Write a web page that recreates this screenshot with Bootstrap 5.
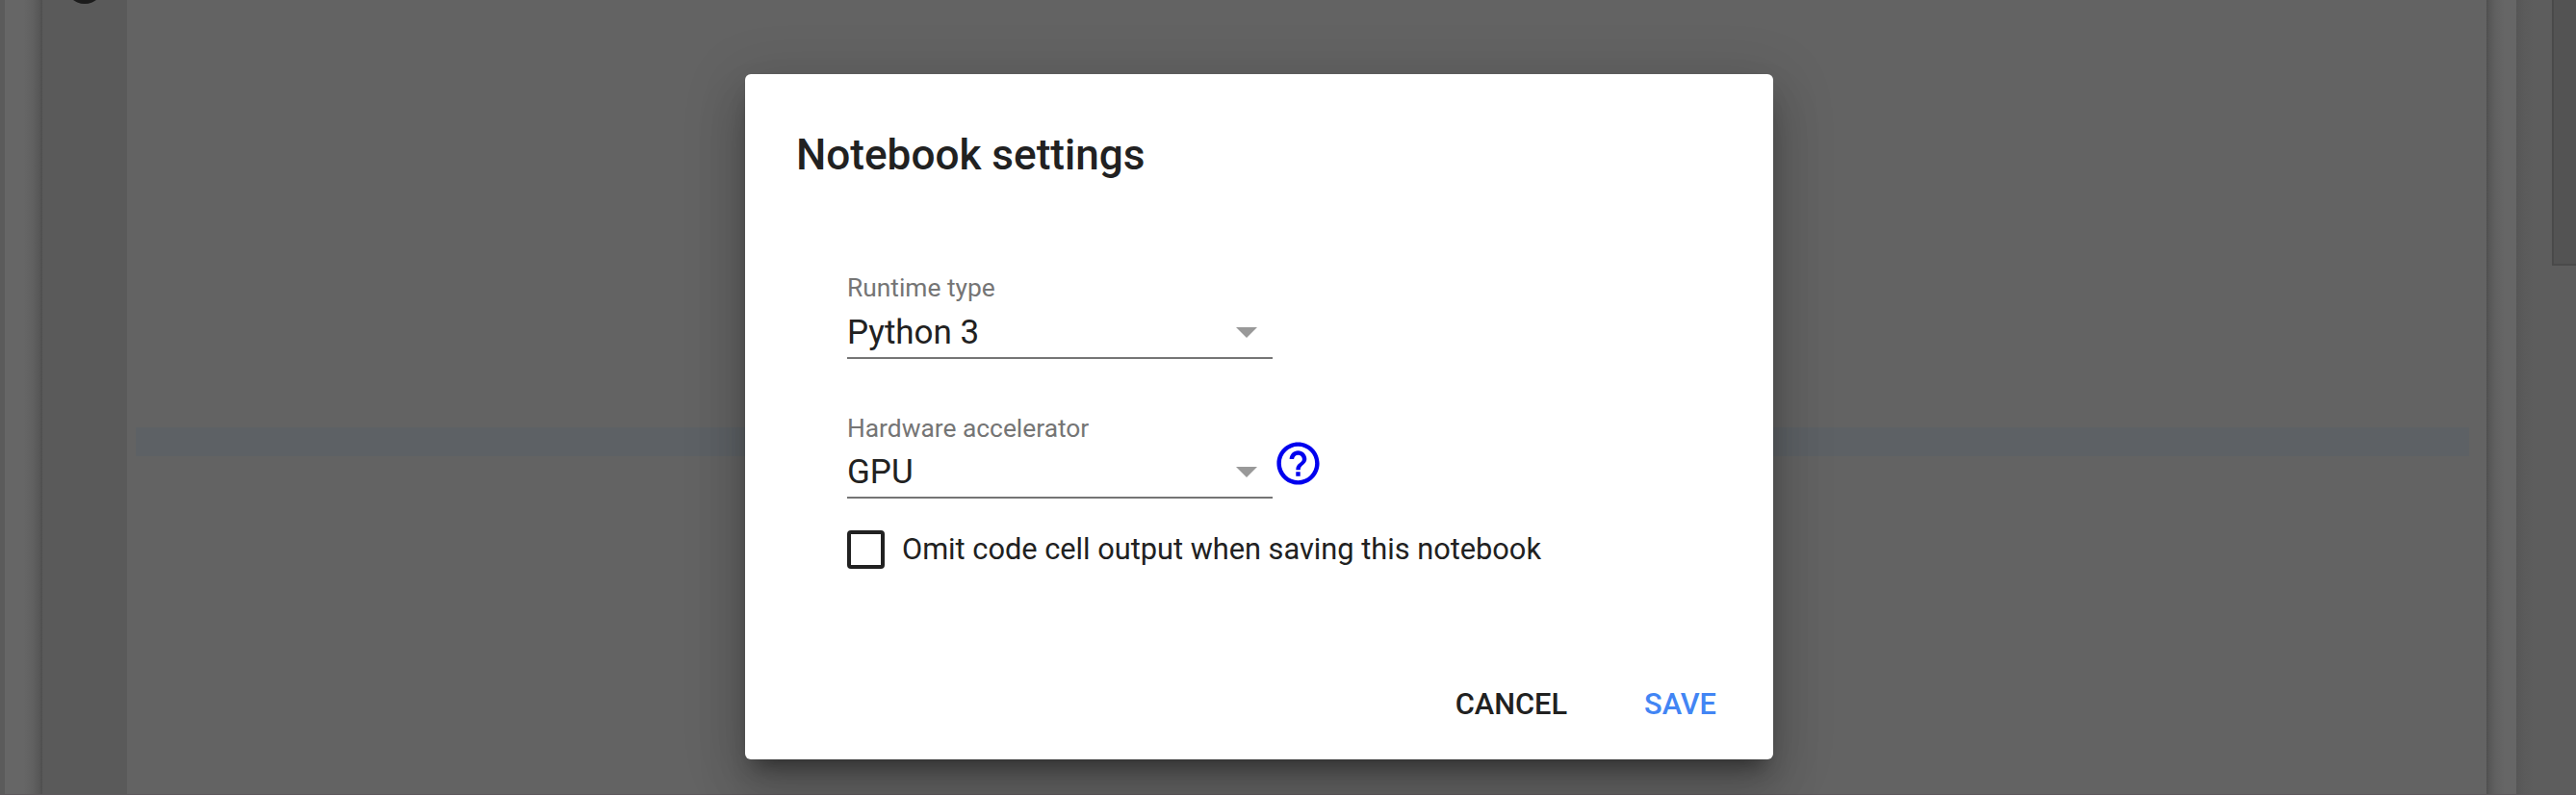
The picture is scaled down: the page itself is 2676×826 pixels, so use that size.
<!DOCTYPE html>
<html lang="en">
<head>
<meta charset="utf-8">
<title>Notebook settings</title>
<link href="https://cdn.jsdelivr.net/npm/bootstrap@5.3.0/dist/css/bootstrap.min.css" rel="stylesheet">
<style>
body{font-family:Roboto,"Liberation Sans",sans-serif;color:#212121;background:#636363}
.page{height:826px;width:2676px;border-bottom:1px solid #5d585c}
.edge{width:5px;background:#5b5b5b}
.gap-left{width:39px;background:linear-gradient(90deg,#666 0,#666 50%,#606060 75%,#575757 92%,#4e4e4e 100%)}
.gutter{width:88px;background:#5a5a5a}
.run-dot{width:40px;height:40px;background:#1c1c1c;margin:-36px 0 0 24px}
.cells{background:#636363;padding:444px 18px 0 9px}
.drop-line{height:30px;background:#5d6165}
.gap-right{width:31px;background:linear-gradient(90deg,#4e4e4e 0,#575757 10%,#606060 30%,#666 60%,#666 100%)}
.track{width:62px;background:linear-gradient(90deg,#565656 0,#5b5b5b 14%,#5d5d5d 30%)}
.thumb{width:25px;height:276px;background:#535353;border:solid #4a4a4a;border-width:0 0 2px 2px}
.dialog-layer{padding:77px 0 0 774px}
.dialog-box{width:1068px;height:712px;border-radius:6px;padding:54px 59px 0 53px;
 box-shadow:0 32px 48px 4px rgba(0,0,0,.14),0 12px 60px 10px rgba(0,0,0,.12),0 16px 20px -10px rgba(0,0,0,.4)}
.dialog-title{font-size:44.1px;line-height:60px;font-weight:500}
.fields{padding:89px 0 0 53px}
.field-label{font-size:26.35px;line-height:38px;height:38px;color:#757575}
.field + .field .field-label{padding-top:1px}
.field-select{width:442px;height:55px;font-size:35px;line-height:51px;border-bottom:2px solid #757575;padding-right:16px}
.field-select svg{margin-top:1px}
.field-select span{padding-top:2px}
.field + .field{margin-top:52px}
.help{margin:30px 0 0 0}
.check-row{margin-top:33px;gap:18px;font-size:30.76px;line-height:39px}
.check-box{width:39px;height:40px;border:4px solid #212121;border-radius:4px;background:#fff}
.actions{margin-top:117px;gap:80px;font-size:30.76px;line-height:48px;font-weight:500}
.actions .btn{font:inherit;padding:0;border:0;color:#212121}
.actions .btn-save{color:#4285f4}
</style>
</head>
<body class="overflow-hidden">
<div class="page d-flex overflow-hidden">
 <div class="edge"></div>
 <div class="gap-left"></div>
 <div class="gutter"><div class="run-dot rounded-circle"></div></div>
 <div class="cells flex-grow-1"><div class="drop-line"></div></div>
 <div class="gap-right"></div>
 <div class="track d-flex justify-content-end"><div class="thumb"></div></div>
</div>
<div class="dialog-layer position-absolute top-0 start-0">
 <div class="dialog-box bg-white" role="dialog">
  <h1 class="dialog-title m-0">Notebook settings</h1>
  <div class="fields">
   <div class="field">
    <div class="field-label">Runtime type</div>
    <div class="field-select d-flex justify-content-between align-items-center"><span>Python 3</span>
     <svg width="22" height="11" viewBox="0 0 22 11"><path d="M0 0h22L11 11z" fill="#999"/></svg></div>
   </div>
   <div class="field d-flex">
    <div>
     <div class="field-label">Hardware accelerator</div>
     <div class="field-select d-flex justify-content-between align-items-center"><span>GPU</span>
      <svg width="22" height="11" viewBox="0 0 22 11"><path d="M0 0h22L11 11z" fill="#999"/></svg></div>
    </div>
    <svg class="help" width="53" height="53" viewBox="0 0 24 24" fill="#00e"><path d="M11 18h2v-2h-2v2zm1-16C6.48 2 2 6.48 2 12s4.48 10 10 10 10-4.48 10-10S17.52 2 12 2zm0 18c-4.41 0-8-3.59-8-8s3.590-8 8-8 8 3.590 8 8-3.590 8-8 8zm0-14c-2.210 0-4 1.790-4 4h2c0-1.100.9-2 2-2s2 .9 2 2c0 2-3 1.750-3 5h2c0-2.250 3-2.500 3-5 0-2.210-1.790-4-4-4z"/></svg>
   </div>
   <div class="check-row d-flex"><span class="check-box"></span><span>Omit code cell output when saving this notebook</span></div>
  </div>
  <div class="actions d-flex justify-content-end"><button class="btn">CANCEL</button><button class="btn btn-save">SAVE</button></div>
 </div>
</div>
<script src="https://cdn.jsdelivr.net/npm/bootstrap@5.3.0/dist/js/bootstrap.bundle.min.js"></script>
</body>
</html>
